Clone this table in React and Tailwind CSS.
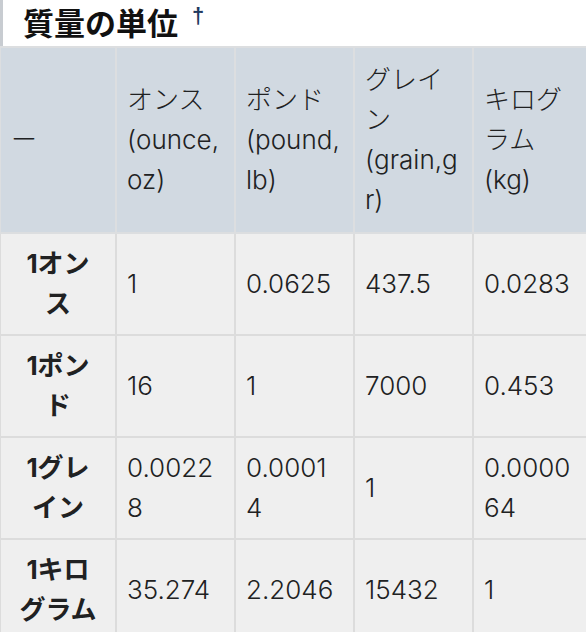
import React from 'react'

const head = [
  ['ー'],
  ['オンス', '(ounce,', 'oz)'],
  ['ポンド', '(pound,', 'lb)'],
  ['グレイ', 'ン', '(grain,g', 'r)'],
  ['キログ', 'ラム', '(kg)'],
]

const rows = [
  [['1オン', 'ス'], ['1'], ['0.0625'], ['437.5'], ['0.0283']],
  [['1ポン', 'ド'], ['16'], ['1'], ['7000'], ['0.453']],
  [['1グレ', 'イン'], ['0.0022', '8'], ['0.0001', '4'], ['1'], ['0.0000', '64']],
  [['1キロ', 'グラム'], ['35.274'], ['2.2046'], ['15432'], ['1']],
]

function Lines({ lines }) {
  return lines.map((l, i) => (
    <React.Fragment key={i}>
      {i > 0 && <br />}
      {l}
    </React.Fragment>
  ))
}

export default function App() {
  return (
    <div
      className="w-[586px] h-[632px] overflow-hidden bg-white text-[#202122]"
      style={{ fontFamily: "Inter, 'Noto Sans CJK JP', sans-serif" }}
    >
      <div className="h-[46px] border-l-[3px] border-[#c8ccd1] pl-[20px] flex items-start">
        <h2
          className="mt-[5px] text-[31px] font-bold leading-[34px] text-[#111]"
          style={{ fontFamily: "'Noto Sans CJK JP', sans-serif" }}
        >
          質量の単位
        </h2>
        <span
          className="ml-[14px] mt-[5px] text-[22px] font-bold leading-[22px] text-[#1f3a5f]"
          style={{ fontFamily: "'Liberation Sans', sans-serif" }}
        >
          †
        </span>
      </div>

      <table className="table-fixed border-collapse w-[592px] -ml-[1px] text-[26px] leading-[40px]">
        <colgroup>
          <col className="w-[116px]" />
          <col className="w-[119px]" />
          <col className="w-[119px]" />
          <col className="w-[119px]" />
          <col className="w-[119px]" />
        </colgroup>
        <thead>
          <tr>
            {head.map((h, i) => (
              <th
                key={i}
                className="bg-[#d1d9e1] border-2 border-[#dcdee0] px-[10px] py-3 text-left align-middle font-light whitespace-nowrap"
              >
                <Lines lines={h} />
              </th>
            ))}
          </tr>
        </thead>
        <tbody>
          {rows.map((r, ri) => (
            <tr key={ri}>
              {r.map((c, ci) =>
                ci === 0 ? (
                  <th
                    key={ci}
                    className="bg-[#efefef] border-2 border-[#dcdcdc] px-2 py-[10px] text-center align-middle font-bold whitespace-nowrap"
                  >
                    <Lines lines={c} />
                  </th>
                ) : (
                  <td
                    key={ci}
                    className="bg-[#efefef] border-2 border-[#dcdcdc] px-[10px] py-[10px] text-left align-middle font-light whitespace-nowrap"
                  >
                    <Lines lines={c} />
                  </td>
                )
              )}
            </tr>
          ))}
        </tbody>
      </table>
    </div>
  )
}
